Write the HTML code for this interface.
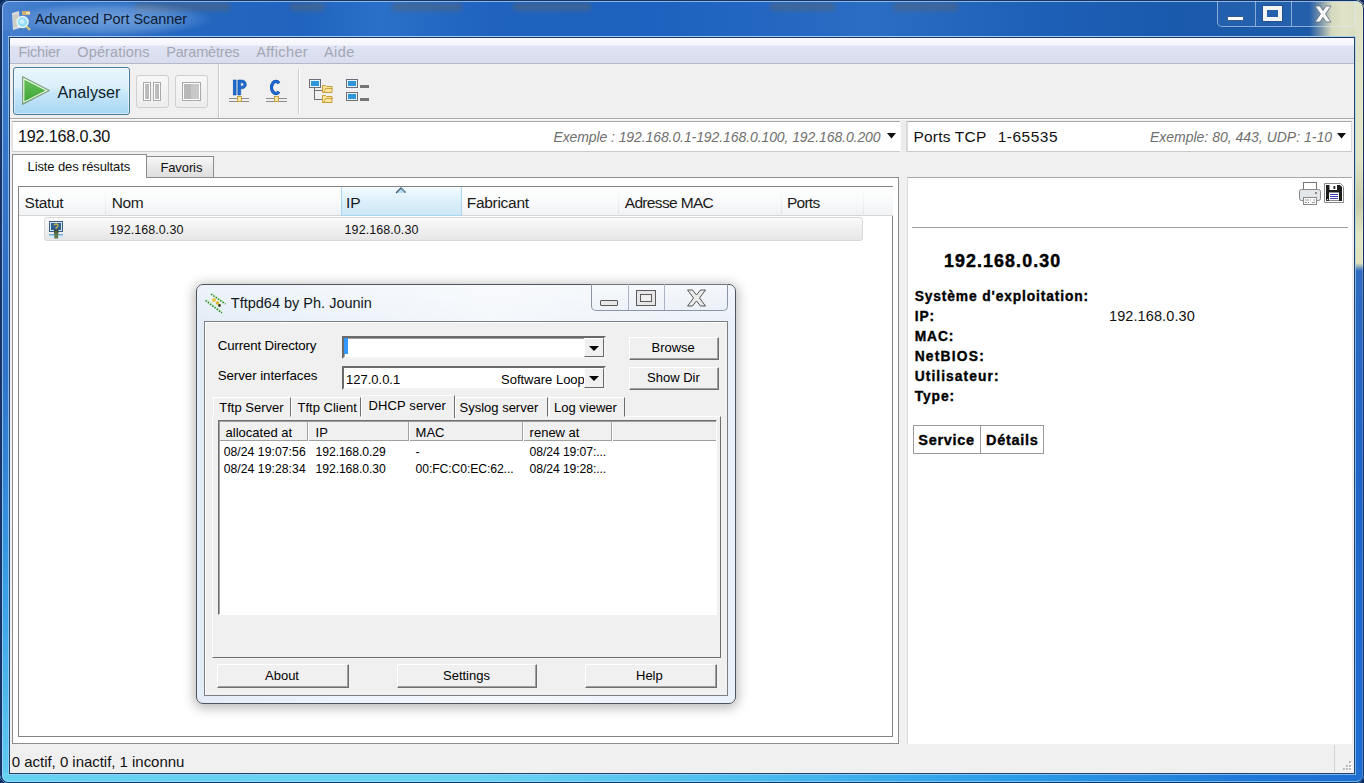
<!DOCTYPE html>
<html><head><meta charset="utf-8">
<style>
*{box-sizing:border-box;margin:0;padding:0}
html,body{width:1364px;height:783px;overflow:hidden;background:#0d2b5e;font-family:"Liberation Sans",sans-serif;position:relative}
.a{position:absolute}
.t{position:absolute;white-space:nowrap;line-height:1}
</style></head><body>

<div class="a" style="left:0;top:0;width:1364px;height:783px;border-radius:8px;overflow:hidden">
<div class="a" style="left:0px;top:0px;width:1364px;height:783px;background:linear-gradient(90deg,#4a82cf 0%,#3372c6 6%,#2467c0 14%,#2064bf 22%,#2a6fc8 28%,#1f63bf 36%,#1d62be 48%,#2367c2 56%,#2a6dc4 64%,#1e60b8 76%,#1a5aad 86%,#1c5aa8 96%,#7f98a8 96.9%,#d4d8bc 97.6%,#dfe2c6 98.5%,#d5d9bc 100%)"></div>
<div class="a" style="left:135px;top:3px;width:95px;height:8px;background:rgba(85,100,120,.55);filter:blur(2.2px);border-radius:3px"></div>
<div class="a" style="left:290px;top:3px;width:35px;height:8px;background:rgba(85,100,120,.55);filter:blur(2.2px);border-radius:3px"></div>
<div class="a" style="left:392px;top:3px;width:70px;height:8px;background:rgba(85,100,120,.55);filter:blur(2.2px);border-radius:3px"></div>
<div class="a" style="left:513px;top:3px;width:78px;height:8px;background:rgba(85,100,120,.55);filter:blur(2.2px);border-radius:3px"></div>
<div class="a" style="left:770px;top:3px;width:65px;height:8px;background:rgba(85,100,120,.55);filter:blur(2.2px);border-radius:3px"></div>
<div class="a" style="left:893px;top:3px;width:65px;height:8px;background:rgba(85,100,120,.55);filter:blur(2.2px);border-radius:3px"></div>
<div class="a" style="left:0px;top:30px;width:10px;height:753px;background:linear-gradient(180deg,#3f7bcb 0%,#2f6fc4 35%,#2f72c8 45%,#3aa0e6 75%,#62cdf2 100%)"></div>
<div class="a" style="left:1355px;top:0px;width:9px;height:783px;background:linear-gradient(180deg,#dfe2c6 0%,#e2e5c8 20%,#c8ccaa 26%,#e3e6c4 30%,#dfe2bc 33.6%,#2f6bc0 34.6%,#1f64c8 60%,#1e6ed2 100%)"></div>
<div class="a" style="left:0px;top:773px;width:1364px;height:10px;background:linear-gradient(90deg,#66d2f2 0%,#6ad3f2 35%,#4bbcee 55%,#2a9be8 75%,#1f78d6 92%,#1e6ed0 100%)"></div>
<div class="a" style="left:0;top:0;width:1364px;height:783px;border-radius:8px;border:1px solid #163468;border-width:1px 1px 1px 2px"></div>
<div class="a" style="left:2px;top:1px;width:1361px;height:781px;border-radius:7px;border:1px solid rgba(175,210,240,.75);border-right-color:rgba(255,255,255,.2);border-bottom-color:rgba(160,225,250,.6)"></div>
</div>
<svg class="a" style="left:10px;top:9px" width="22" height="22" viewBox="0 0 22 22">
<path d="M2 4 L9 2 L10 19 L3 21 Z" fill="#e8e6df" opacity=".9"/>
<path d="M3 6 L8 5 L8.5 17 L3.5 18.5Z" fill="#c9c6bb" opacity=".7"/>
<circle cx="12.5" cy="13" r="5.5" fill="#8fdcf8" stroke="#e9f6fb" stroke-width="1.5"/>
<circle cx="12" cy="12.5" r="2.5" fill="#d9f4ff" opacity=".8"/>
<rect x="12" y="2" width="8" height="4" fill="#e0b060" opacity=".9"/>
<rect x="16" y="3" width="4" height="2" fill="#f3e0a8"/>
<path d="M16.5 17.5 L20 21" stroke="#d3c27a" stroke-width="2.4"/>
</svg>
<div class="a" style="left:12px;top:2px;width:200px;height:34px;background:radial-gradient(ellipse at 50% 50%,rgba(200,225,250,.42) 0%,rgba(200,225,250,.25) 45%,rgba(200,225,250,0) 72%)"></div>
<div class="t" style="left:35px;top:12.31px;font-size:14.4px;color:#0b1a33;font-weight:normal;font-style:normal;letter-spacing:0px;font-family:'Liberation Sans',sans-serif;">Advanced Port Scanner</div>
<div class="a" style="left:1217px;top:1px;width:138px;height:26px;border:1px solid rgba(220,235,255,.55);border-top:none;border-radius:0 0 5px 5px;background:rgba(255,255,255,.04)"></div>
<div class="a" style="left:1255px;top:1px;width:1px;height:25px;background:rgba(220,235,255,.55)"></div>
<div class="a" style="left:1291px;top:1px;width:1px;height:25px;background:rgba(220,235,255,.55)"></div>
<div class="a" style="left:1227px;top:16px;width:17px;height:5px;background:#fff;border:1px solid #3a5a8a;border-radius:1px"></div>
<div class="a" style="left:1263px;top:6px;width:19px;height:15px;border:4px solid #f4f4f4;outline:1px solid rgba(40,70,120,.6)"></div>
<svg class="a" style="left:1312px;top:5px" width="22" height="18" viewBox="0 0 22 18"><path d="M3 1 L8 1 L11 5.5 L14 1 L19 1 L13.5 9 L19 17 L14 17 L11 12.5 L8 17 L3 17 L8.5 9 Z" fill="#f7f7f7" stroke="#5a6a7a" stroke-width=".8"/></svg>
<div class="a" style="left:9px;top:37px;width:1346px;height:737px;background:#f0f0f0;border:1px solid #23416b;border-top-color:#1c3560"></div>
<div class="a" style="left:8px;top:36px;width:1348px;height:739px;border:1px solid rgba(165,212,245,.7);border-top-color:#a9cdf0"></div>
<div class="a" style="left:10px;top:38px;width:1344px;height:26px;background:linear-gradient(180deg,#fbfbfe 0%,#f4f5fb 28%,#dfe3f2 34%,#d8ddef 100%);border-bottom:1px solid #b3b9cb"></div>
<div class="t" style="left:18.4px;top:45.33px;font-size:14.5px;color:#a3a7b3;font-weight:normal;font-style:normal;letter-spacing:-0.2px;font-family:'Liberation Sans',sans-serif;">Fichier</div>
<div class="t" style="left:77.3px;top:45.33px;font-size:14.5px;color:#a3a7b3;font-weight:normal;font-style:normal;letter-spacing:0.13px;font-family:'Liberation Sans',sans-serif;">Opérations</div>
<div class="t" style="left:166.2px;top:45.33px;font-size:14.5px;color:#a3a7b3;font-weight:normal;font-style:normal;letter-spacing:-0.17px;font-family:'Liberation Sans',sans-serif;">Paramètres</div>
<div class="t" style="left:256.2px;top:45.33px;font-size:14.5px;color:#a3a7b3;font-weight:normal;font-style:normal;letter-spacing:0.37px;font-family:'Liberation Sans',sans-serif;">Afficher</div>
<div class="t" style="left:324px;top:45.33px;font-size:14.5px;color:#a3a7b3;font-weight:normal;font-style:normal;letter-spacing:0.45px;font-family:'Liberation Sans',sans-serif;">Aide</div>
<div class="a" style="left:10px;top:64px;width:1344px;height:54px;background:#f0f0f0"></div>
<div class="a" style="left:10px;top:118px;width:1344px;height:1px;background:#a7a7a7"></div>
<div class="a" style="left:10px;top:119px;width:1344px;height:1px;background:#fbfbfb"></div>
<div class="a" style="left:13px;top:67px;width:117px;height:48px;border:1px solid #4a7a98;border-radius:3px;background:linear-gradient(180deg,#e9f6fd 0%,#dcf0fb 40%,#c6e6f9 55%,#a8d6f3 100%);box-shadow:inset 0 0 0 1px rgba(255,255,255,.5)"></div>
<svg class="a" style="left:21px;top:75px" width="30" height="31" viewBox="0 0 30 31"><defs><linearGradient id="tg" x1="0" y1="0" x2="0" y2="1"><stop offset="0" stop-color="#66c35a"/><stop offset="1" stop-color="#3da236"/></linearGradient></defs><path d="M1.5 1.5 L28.5 15.5 L1.5 29.5 Z" fill="url(#tg)" stroke="#8a9a8a" stroke-width="1"/><path d="M2.8 3.8 L25.8 15.5 L2.8 27.2 Z" fill="none" stroke="#f4fbf2" stroke-width="1.1"/></svg>
<div class="t" style="left:57.5px;top:83.99px;font-size:16.2px;color:#0e1e2c;font-weight:normal;font-style:normal;letter-spacing:0px;font-family:'Liberation Sans',sans-serif;">Analyser</div>
<div class="a" style="left:136px;top:75px;width:33px;height:33px;border:1px solid #cfcfcf;border-radius:3px;background:linear-gradient(180deg,#f7f7f7,#ededed)"></div>
<div class="a" style="left:175px;top:75px;width:33px;height:33px;border:1px solid #cfcfcf;border-radius:3px;background:linear-gradient(180deg,#f7f7f7,#ededed)"></div>
<div class="a" style="left:143px;top:82px;width:8px;height:19px;border:1px solid #a9a9a9;background:linear-gradient(90deg,#c3c3c3,#b4b4b4);box-shadow:inset 0 0 0 1px #fff"></div>
<div class="a" style="left:153px;top:82px;width:8px;height:19px;border:1px solid #a9a9a9;background:linear-gradient(90deg,#c3c3c3,#b4b4b4);box-shadow:inset 0 0 0 1px #fff"></div>
<div class="a" style="left:182px;top:82px;width:19px;height:19px;border:1px solid #a9a9a9;background:linear-gradient(90deg,#b9b9b9 0,#b9b9b9 50%,#c8c8c8 50%);box-shadow:inset 0 0 0 1px #fff"></div>
<div class="a" style="left:218px;top:64px;width:1px;height:54px;background:#c6c6c6"></div>
<div class="a" style="left:219px;top:64px;width:1px;height:54px;background:#fff"></div>
<div class="a" style="left:298px;top:69px;width:1px;height:45px;background:#cdcdcd"></div>
<div class="a" style="left:299px;top:69px;width:1px;height:45px;background:#fff"></div>
<svg class="a" style="left:228px;top:76px" width="24" height="28" viewBox="0 0 24 28"><g fill="#1e6ad0" stroke="#0b48a0" stroke-width=".5"><rect x="5.2" y="4" width="2.9" height="15"/><path fill-rule="evenodd" d="M9.8 4 h4.2 a4.3 4.3 0 0 1 0 8.8 h-1.3 v6.2 h-2.9 z M12.7 6.7 h1.2 a1.75 1.75 0 0 1 0 3.5 h-1.2 z"/></g><path d="M1 22.5h20M1 25.5h20" stroke="#8d8d8d" stroke-width="1"/><rect x="9.5" y="20.5" width="4" height="5" fill="#f7e8a0" stroke="#c39a3a" stroke-width=".9"/></svg>
<svg class="a" style="left:265px;top:76px" width="24" height="28" viewBox="0 0 24 28"><path d="M13.94 7.19 A4.3 6.1 0 1 0 13.94 15.81" fill="none" stroke="#0b48a0" stroke-width="3.3"/><path d="M13.94 7.19 A4.3 6.1 0 1 0 13.94 15.81" fill="none" stroke="#1e6ad0" stroke-width="2.4"/><path d="M1 22.5h21M1 25.5h21" stroke="#8d8d8d" stroke-width="1"/><rect x="9.5" y="20.5" width="4" height="5" fill="#f7e8a0" stroke="#c39a3a" stroke-width=".9"/></svg>
<div class="a" style="left:309px;top:79px;width:12px;height:9px;background:#2d95d8;border:1px solid #6a6e78;box-shadow:inset 0 0 0 1px #e6f6fc"></div>
<div class="a" style="left:314px;top:88px;width:1px;height:12px;background:#6f6f6f"></div>
<div class="a" style="left:314px;top:90px;width:9px;height:1px;background:#6f6f6f"></div>
<div class="a" style="left:314px;top:99px;width:9px;height:1px;background:#6f6f6f"></div>
<svg class="a" style="left:322px;top:84px" width="11" height="9" viewBox="0 0 11 9"><path d="M.5 1.5h3l1 1h5.5v6H.5z" fill="#fbe79a" stroke="#c99a3c"/><path d="M2 8.5 L3.5 4.5 H10.5" fill="none" stroke="#c99a3c" stroke-width=".9"/></svg>
<svg class="a" style="left:322px;top:94px" width="11" height="9" viewBox="0 0 11 9"><path d="M.5 1.5h3l1 1h5.5v6H.5z" fill="#fbe79a" stroke="#c99a3c"/><path d="M2 8.5 L3.5 4.5 H10.5" fill="none" stroke="#c99a3c" stroke-width=".9"/></svg>
<div class="a" style="left:346px;top:79px;width:12px;height:9px;background:#2d95d8;border:1px solid #6a6e78;box-shadow:inset 0 0 0 1px #e6f6fc"></div>
<div class="a" style="left:346px;top:92px;width:12px;height:9px;background:#2d95d8;border:1px solid #6a6e78;box-shadow:inset 0 0 0 1px #e6f6fc"></div>
<div class="a" style="left:360px;top:85px;width:9px;height:2.5px;background:#757575"></div>
<div class="a" style="left:360px;top:98px;width:9px;height:2.5px;background:#757575"></div>
<div class="a" style="left:12px;top:121px;width:888px;height:31px;background:#fff;border-top:1px solid #a9a9a9;border-bottom:1px solid #c9c9c9;border-left:1px solid #dcdcdc"></div>
<div class="t" style="left:18px;top:128.09px;font-size:16.2px;color:#111;font-weight:normal;font-style:normal;letter-spacing:-0.2px;font-family:'Liberation Sans',sans-serif;">192.168.0.30</div>
<div class="t" style="right:483.5px;top:130.35px;font-size:14px;color:#6f6f6f;font-weight:normal;font-style:italic;letter-spacing:-0.09px;font-family:'Liberation Sans',sans-serif;">Exemple : 192.168.0.1-192.168.0.100, 192.168.0.200</div>
<svg class="a" style="left:887px;top:133px" width="9" height="6" viewBox="0 0 9 6"><path d="M0 0 L9 0 L4.5 5.5 Z" fill="#111"/></svg>
<div class="a" style="left:900px;top:121px;width:7px;height:31px;background:#ececec;border-left:1px solid #fafafa;border-right:1px solid #d6d6d6"></div>
<div class="a" style="left:907px;top:121px;width:445px;height:31px;background:#fff;border-top:1px solid #a9a9a9;border-bottom:1px solid #c9c9c9;border-left:1px solid #dcdcdc;border-right:1px solid #dcdcdc"></div>
<div class="t" style="left:913.5px;top:129.08px;font-size:15.5px;color:#111;font-weight:normal;font-style:normal;letter-spacing:0.19px;font-family:'Liberation Sans',sans-serif;">Ports TCP</div>
<div class="t" style="left:997.7px;top:129.08px;font-size:15.5px;color:#111;font-weight:normal;font-style:normal;letter-spacing:0.5px;font-family:'Liberation Sans',sans-serif;">1-65535</div>
<div class="t" style="right:32px;top:130.35px;font-size:14px;color:#6f6f6f;font-weight:normal;font-style:italic;letter-spacing:0px;font-family:'Liberation Sans',sans-serif;">Exemple: 80, 443, UDP: 1-10</div>
<svg class="a" style="left:1337px;top:133px" width="9" height="6" viewBox="0 0 9 6"><path d="M0 0 L9 0 L4.5 5.5 Z" fill="#111"/></svg>
<div class="a" style="left:12px;top:177px;width:887px;height:567px;background:#fff;border:1px solid #8d8d8d"></div>
<div class="a" style="left:146px;top:156px;width:68px;height:22px;border:1px solid #8d8d8d;background:linear-gradient(180deg,#f7f7f7 0%,#ececec 40%,#dedede 100%)"></div>
<div class="a" style="left:12px;top:154px;width:135px;height:24px;background:#fff;border:1px solid #8d8d8d;border-bottom:none"></div>
<div class="t" style="left:27.6px;top:159.90px;font-size:13px;color:#111;font-weight:normal;font-style:normal;letter-spacing:-0.12px;font-family:'Liberation Sans',sans-serif;">Liste des résultats</div>
<div class="t" style="left:160.4px;top:161.30px;font-size:13px;color:#111;font-weight:normal;font-style:normal;letter-spacing:-0.1px;font-family:'Liberation Sans',sans-serif;">Favoris</div>
<div class="a" style="left:18px;top:186px;width:875px;height:551px;background:#fff;border:1px solid #848484"></div>
<div class="a" style="left:19px;top:187px;width:874px;height:29px;background:linear-gradient(180deg,#ffffff 0%,#f9fafb 50%,#f1f2f4 100%);border-bottom:1px solid #d5d5d5"></div>
<div class="a" style="left:341px;top:187px;width:121px;height:29px;background:linear-gradient(180deg,#f4fbfe 0%,#e3f3fc 35%,#d9eefa 60%,#cfe8f7 100%);border:1px solid #a8d6f0;border-top:none"></div>
<svg class="a" style="left:395px;top:187px" width="12" height="7" viewBox="0 0 12 7"><path d="M1 6 L6 1 L11 6 Z" fill="#b9dcf2"/><path d="M1 6 L6 1 L10.5 5.5" fill="none" stroke="#3d5a73" stroke-width="1.3"/><path d="M6 1 L10.5 5.5" fill="none" stroke="#6f8fa8" stroke-width="1.1"/></svg>
<div class="a" style="left:105px;top:187px;width:1px;height:29px;background:linear-gradient(180deg,#fff,#dfe2e6)"></div>
<div class="a" style="left:618px;top:187px;width:1px;height:29px;background:linear-gradient(180deg,#fff,#dfe2e6)"></div>
<div class="a" style="left:781px;top:187px;width:1px;height:29px;background:linear-gradient(180deg,#fff,#dfe2e6)"></div>
<div class="a" style="left:863px;top:187px;width:1px;height:29px;background:linear-gradient(180deg,#fff,#dfe2e6)"></div>
<div class="t" style="left:24.6px;top:194.78px;font-size:15.5px;color:#1a1a1a;font-weight:normal;font-style:normal;letter-spacing:-0.3px;font-family:'Liberation Sans',sans-serif;">Statut</div>
<div class="t" style="left:111.7px;top:194.78px;font-size:15.5px;color:#1a1a1a;font-weight:normal;font-style:normal;letter-spacing:-0.35px;font-family:'Liberation Sans',sans-serif;">Nom</div>
<div class="t" style="left:346px;top:194.78px;font-size:15.5px;color:#1a1a1a;font-weight:normal;font-style:normal;letter-spacing:0px;font-family:'Liberation Sans',sans-serif;">IP</div>
<div class="t" style="left:466.8px;top:194.78px;font-size:15.5px;color:#1a1a1a;font-weight:normal;font-style:normal;letter-spacing:-0.3px;font-family:'Liberation Sans',sans-serif;">Fabricant</div>
<div class="t" style="left:624.7px;top:194.78px;font-size:15.5px;color:#1a1a1a;font-weight:normal;font-style:normal;letter-spacing:-0.65px;font-family:'Liberation Sans',sans-serif;">Adresse MAC</div>
<div class="t" style="left:787px;top:194.78px;font-size:15.5px;color:#1a1a1a;font-weight:normal;font-style:normal;letter-spacing:-0.75px;font-family:'Liberation Sans',sans-serif;">Ports</div>
<div class="a" style="left:44px;top:217px;width:819px;height:24px;border:1px solid #d9d9d9;border-radius:3px;background:linear-gradient(180deg,#fafafa 0%,#f0f0f0 50%,#e6e6e6 100%)"></div>
<svg class="a" style="left:48px;top:220px" width="16" height="19" viewBox="0 0 16 19"><rect x="1.5" y="1.5" width="13" height="10" fill="#cfe8f8" stroke="#3b5f80"/><rect x="3" y="3" width="10" height="7" fill="#2f5f92"/><path d="M6 5.2 Q8 3 10 5 Q10.5 6.5 8.5 7.5 L8 9" fill="none" stroke="#c9b24a" stroke-width="1.4"/><rect x="6.5" y="10" width="3.5" height="8" fill="#4d6a3c" stroke="#222" stroke-width=".6"/><rect x="1" y="14" width="14" height="1.6" fill="#6aa8d8"/><rect x="1" y="15.6" width="14" height="2.4" fill="#cfeaf9" opacity=".8"/><rect x="6.5" y="13.5" width="3.5" height="4.5" fill="#5f7a4a"/></svg>
<div class="t" style="left:109.6px;top:223.92px;font-size:12.5px;color:#111;font-weight:normal;font-style:normal;letter-spacing:0.07px;font-family:'Liberation Sans',sans-serif;">192.168.0.30</div>
<div class="t" style="left:344.6px;top:223.92px;font-size:12.5px;color:#111;font-weight:normal;font-style:normal;letter-spacing:0.07px;font-family:'Liberation Sans',sans-serif;">192.168.0.30</div>
<div class="a" style="left:907px;top:177px;width:445px;height:567px;background:#fff;border-left:1px solid #dadada;border-top:1px solid #a7a7a7"></div>
<div class="a" style="left:912px;top:227px;width:436px;height:1px;background:#a0a0a0"></div>
<div class="t" style="left:944px;top:253.23px;font-size:17.8px;color:#000;font-weight:bold;font-style:normal;letter-spacing:1.12px;font-family:'Liberation Sans',sans-serif;-webkit-text-stroke:.45px #000">192.168.0.30</div>
<div class="t" style="left:914.7px;top:289.62px;font-size:13.8px;color:#000;font-weight:bold;font-style:normal;letter-spacing:0.8700000000000001px;font-family:'Liberation Sans',sans-serif;-webkit-text-stroke:.35px #000">Système d'exploitation:</div>
<div class="t" style="left:914.7px;top:309.62px;font-size:13.8px;color:#000;font-weight:bold;font-style:normal;letter-spacing:0.8700000000000001px;font-family:'Liberation Sans',sans-serif;-webkit-text-stroke:.35px #000">IP:</div>
<div class="t" style="left:914.7px;top:329.62px;font-size:13.8px;color:#000;font-weight:bold;font-style:normal;letter-spacing:0.8700000000000001px;font-family:'Liberation Sans',sans-serif;-webkit-text-stroke:.35px #000">MAC:</div>
<div class="t" style="left:914.7px;top:349.62px;font-size:13.8px;color:#000;font-weight:bold;font-style:normal;letter-spacing:1.22px;font-family:'Liberation Sans',sans-serif;-webkit-text-stroke:.35px #000">NetBIOS:</div>
<div class="t" style="left:914.7px;top:369.62px;font-size:13.8px;color:#000;font-weight:bold;font-style:normal;letter-spacing:1.07px;font-family:'Liberation Sans',sans-serif;-webkit-text-stroke:.35px #000">Utilisateur:</div>
<div class="t" style="left:914.7px;top:389.62px;font-size:13.8px;color:#000;font-weight:bold;font-style:normal;letter-spacing:0.9199999999999999px;font-family:'Liberation Sans',sans-serif;-webkit-text-stroke:.35px #000">Type:</div>
<div class="t" style="left:1109px;top:309.33px;font-size:14.5px;color:#111;font-weight:normal;font-style:normal;letter-spacing:0.1px;font-family:'Liberation Sans',sans-serif;">192.168.0.30</div>
<div class="a" style="left:913px;top:425px;width:131px;height:29px;border:1px solid #9a9a9a;background:#fff"></div>
<div class="a" style="left:980px;top:426px;width:1px;height:27px;background:#9a9a9a"></div>
<div class="t" style="left:918.3px;top:432.73px;font-size:14.5px;color:#000;font-weight:bold;font-style:normal;letter-spacing:0.68px;font-family:'Liberation Sans',sans-serif;-webkit-text-stroke:.35px #000">Service</div>
<div class="t" style="left:986px;top:432.73px;font-size:14.5px;color:#000;font-weight:bold;font-style:normal;letter-spacing:0.72px;font-family:'Liberation Sans',sans-serif;-webkit-text-stroke:.35px #000">Détails</div>
<svg class="a" style="left:1298px;top:181px" width="48" height="25" viewBox="0 0 48 25">
<rect x="5.5" y="1.5" width="13" height="7" fill="#fff" stroke="#777"/>
<rect x="1.5" y="8.5" width="21" height="11" rx="2" fill="#e3e7ea" stroke="#8a8a8a"/>
<rect x="5.5" y="16.5" width="13" height="7" fill="#fff" stroke="#888"/>
<rect x="17" y="11" width="2" height="2" fill="#888"/>
<path d="M7 19h4M12 19h1M15 19h2M7 21.5h2M10 21.5h1M14 21.5h3" stroke="#999" stroke-width="1"/>
<path d="M26.5 2.5h16l3 3v16h-19z" fill="#fff" stroke="#8a8a8a"/>
<path d="M28 4h14l2 2v14H28z" fill="#1c1c1c"/>
<rect x="31.5" y="4" width="7.5" height="5" fill="#fff"/><rect x="35.5" y="5" width="1.8" height="3" fill="#222"/>
<rect x="31" y="11.5" width="10" height="8" fill="#fff"/>
<path d="M32 13.5h8M32 15.5h8M32 17.5h8" stroke="#3c3cb0" stroke-width="1"/>
<rect x="29" y="18" width="1.2" height="1.2" fill="#ddd"/>
</svg>
<div class="t" style="left:11.8px;top:753.50px;font-size:15px;color:#111;font-weight:normal;font-style:normal;letter-spacing:-0.03px;font-family:'Liberation Sans',sans-serif;">0 actif, 0 inactif, 1 inconnu</div>
<div class="a" style="left:1334px;top:745px;width:1px;height:27px;background:#d3d3d3"></div>
<div class="a" style="left:1349px;top:761px;width:2px;height:2px;background:#b9b9b9;box-shadow:1px 1px 0 #fff"></div>
<div class="a" style="left:1346px;top:764.5px;width:2px;height:2px;background:#b9b9b9;box-shadow:1px 1px 0 #fff"></div>
<div class="a" style="left:1349px;top:764.5px;width:2px;height:2px;background:#b9b9b9;box-shadow:1px 1px 0 #fff"></div>
<div class="a" style="left:1342.5px;top:768px;width:2px;height:2px;background:#b9b9b9;box-shadow:1px 1px 0 #fff"></div>
<div class="a" style="left:1346px;top:768px;width:2px;height:2px;background:#b9b9b9;box-shadow:1px 1px 0 #fff"></div>
<div class="a" style="left:1349px;top:768px;width:2px;height:2px;background:#b9b9b9;box-shadow:1px 1px 0 #fff"></div>
<div class="a" style="left:196px;top:284px;width:540px;height:420px;border-radius:7px;box-shadow:0 2px 12px 2px rgba(0,0,0,.28)"></div>
<div class="a" style="left:196px;top:284px;width:540px;height:420px;border-radius:7px;border:1px solid #4d5560;background:linear-gradient(90deg,#e4edf7 0%,#eef4fb 30%,#f5f8fc 55%,#ebf1f9 100%)"></div>
<div class="a" style="left:197px;top:285px;width:538px;height:36px;border-radius:6px 6px 0 0;background:linear-gradient(180deg,rgba(255,255,255,.35),rgba(255,255,255,0))"></div>
<svg class="a" style="left:204px;top:292px" width="23" height="23" viewBox="0 0 23 23"><path d="M1.5 8.5 L18 21 M7 2 L21.5 12" stroke="#1f8a1f" stroke-width="1.5" stroke-dasharray="1.6 1.2"/><path d="M2.5 7.5 L18.5 19.5 M8 1.5 L21.5 11" stroke="#a8e07a" stroke-width=".6" opacity=".8"/><circle cx="10" cy="8" r="2" fill="#e8c43a"/><circle cx="13.5" cy="11" r="1.8" fill="#d9b52e"/><circle cx="15.5" cy="13.5" r="1.4" fill="#3a3a1a"/></svg>
<div class="t" style="left:230.8px;top:296.23px;font-size:14.5px;color:#101820;font-weight:normal;font-style:normal;letter-spacing:0px;font-family:'Liberation Sans',sans-serif;">Tftpd64 by Ph. Jounin</div>
<div class="a" style="left:591px;top:284px;width:137px;height:27px;border:1px solid #8a96a6;border-top:none;border-radius:0 0 5px 5px;background:linear-gradient(180deg,rgba(255,255,255,.2),rgba(230,236,245,.3))"></div>
<div class="a" style="left:628px;top:284px;width:1px;height:26px;background:#aab4c2"></div>
<div class="a" style="left:664px;top:284px;width:1px;height:26px;background:#aab4c2"></div>
<div class="a" style="left:600px;top:300px;width:18px;height:6px;border:1px solid #5a5a5a;background:#e8e8e8;border-radius:1px"></div>
<div class="a" style="left:636px;top:290px;width:20px;height:16px;border:1px solid #5a5a5a;background:#f0f0f0;box-shadow:inset 0 0 0 3px #e6e6e6, inset 0 0 0 4px #5a5a5a"></div>
<svg class="a" style="left:686px;top:289px" width="21" height="18" viewBox="0 0 21 18"><path d="M1.5 1 L6.5 1 L10.5 6 L14.5 1 L19.5 1 L13.5 9 L19.5 17 L14.5 17 L10.5 12 L6.5 17 L1.5 17 L7.5 9 Z" fill="#eaeaea" stroke="#555" stroke-width="1"/></svg>
<div class="a" style="left:204px;top:321px;width:524px;height:375px;background:#f0f0f0;border:1px solid #7a7f86;box-shadow:inset 1px 1px 0 #fff"></div>
<div class="t" style="left:217.7px;top:339.24px;font-size:13.3px;color:#000;font-weight:normal;font-style:normal;letter-spacing:-0.15px;font-family:'Liberation Sans',sans-serif;">Current Directory</div>
<div class="t" style="left:217.7px;top:369.14px;font-size:13.3px;color:#000;font-weight:normal;font-style:normal;letter-spacing:-0.05px;font-family:'Liberation Sans',sans-serif;">Server interfaces</div>
<div class="a" style="left:342px;top:336px;width:264px;height:23px;background:#fff;border:2px solid;border-color:#6a6a6a #f4f4f4 #f4f4f4 #6a6a6a;box-shadow:inset 1px 1px 0 #a0a0a0"></div>
<div class="a" style="left:344px;top:338px;width:4px;height:16px;background:#3399ff"></div>
<div class="a" style="left:584px;top:338px;width:20px;height:19px;background:#f0f0f0;border:1px solid;border-color:#fff #6a6a6a #6a6a6a #fff"></div>
<svg class="a" style="left:589px;top:346px" width="10" height="5" viewBox="0 0 10 5"><path d="M0 0 L10 0 L5 5 Z" fill="#000"/></svg>
<div class="a" style="left:342px;top:366px;width:264px;height:24px;background:#fff;border:2px solid;border-color:#6a6a6a #f4f4f4 #f4f4f4 #6a6a6a"></div>
<div class="t" style="left:346px;top:373.00px;font-size:13px;color:#000;font-weight:normal;font-style:normal;letter-spacing:0px;font-family:'Liberation Sans',sans-serif;">127.0.0.1</div>
<div class="a" style="left:344px;top:368px;width:240px;height:20px;overflow:hidden"><div class="t" style="left:157px;top:5px;font-size:13px;color:#000">Software Loopback</div></div>
<div class="a" style="left:584px;top:368px;width:20px;height:20px;background:#f0f0f0;border:1px solid;border-color:#fff #6a6a6a #6a6a6a #fff"></div>
<svg class="a" style="left:589px;top:376px" width="10" height="5" viewBox="0 0 10 5"><path d="M0 0 L10 0 L5 5 Z" fill="#000"/></svg>
<div class="a" style="left:629px;top:337px;width:90px;height:23px;background:#f0f0f0;border:1px solid;border-color:#fff #6e6e6e #6e6e6e #fff;box-shadow:inset -1px -1px 0 #a0a0a0"></div>
<div class="t" style="left:651.5px;top:341.00px;font-size:13px;color:#000;font-weight:normal;font-style:normal;letter-spacing:0px;font-family:'Liberation Sans',sans-serif;">Browse</div>
<div class="a" style="left:629px;top:367px;width:90px;height:23px;background:#f0f0f0;border:1px solid;border-color:#fff #6e6e6e #6e6e6e #fff;box-shadow:inset -1px -1px 0 #a0a0a0"></div>
<div class="t" style="left:647px;top:371.00px;font-size:13px;color:#000;font-weight:normal;font-style:normal;letter-spacing:0px;font-family:'Liberation Sans',sans-serif;">Show Dir</div>
<div class="a" style="left:212px;top:416px;width:509px;height:242px;background:#f0f0f0;border:1px solid;border-color:#fff #6e6e6e #6e6e6e #fff"></div>
<div class="a" style="left:213px;top:397px;width:78px;height:20px;background:#f0f0f0;border:1px solid;border-color:#fff #6e6e6e transparent #fff"></div>
<div class="t" style="left:219.3px;top:400.50px;font-size:13px;color:#000;font-weight:normal;font-style:normal;letter-spacing:0px;font-family:'Liberation Sans',sans-serif;">Tftp Server</div>
<div class="a" style="left:291px;top:397px;width:70px;height:20px;background:#f0f0f0;border:1px solid;border-color:#fff #6e6e6e transparent #fff"></div>
<div class="t" style="left:297.5px;top:400.50px;font-size:13px;color:#000;font-weight:normal;font-style:normal;letter-spacing:0px;font-family:'Liberation Sans',sans-serif;">Tftp Client</div>
<div class="a" style="left:455px;top:397px;width:93px;height:20px;background:#f0f0f0;border:1px solid;border-color:#fff #6e6e6e transparent #fff"></div>
<div class="t" style="left:459.5px;top:400.50px;font-size:13px;color:#000;font-weight:normal;font-style:normal;letter-spacing:0px;font-family:'Liberation Sans',sans-serif;">Syslog server</div>
<div class="a" style="left:549px;top:397px;width:76px;height:20px;background:#f0f0f0;border:1px solid;border-color:#fff #6e6e6e transparent #fff"></div>
<div class="t" style="left:554px;top:400.50px;font-size:13px;color:#000;font-weight:normal;font-style:normal;letter-spacing:0px;font-family:'Liberation Sans',sans-serif;">Log viewer</div>
<div class="a" style="left:361px;top:395px;width:94px;height:23px;background:#f0f0f0;border:1px solid;border-color:#fff #6e6e6e transparent #fff;border-bottom:none"></div>
<div class="t" style="left:368.6px;top:398.60px;font-size:13px;color:#000;font-weight:normal;font-style:normal;letter-spacing:0.1px;font-family:'Liberation Sans',sans-serif;">DHCP server</div>
<div class="a" style="left:218px;top:420px;width:499px;height:195px;background:#fff;border:1px solid;border-color:#6e6e6e #fff #fff #6e6e6e;box-shadow:inset 1px 1px 0 #a0a0a0"></div>
<div class="a" style="left:220px;top:422px;width:496px;height:19px;background:#f0f0f0;border-bottom:1px solid #a0a0a0"></div>
<div class="a" style="left:307px;top:422px;width:1px;height:19px;background:#a0a0a0;box-shadow:1px 0 0 #fff"></div>
<div class="a" style="left:408px;top:422px;width:1px;height:19px;background:#a0a0a0;box-shadow:1px 0 0 #fff"></div>
<div class="a" style="left:522px;top:422px;width:1px;height:19px;background:#a0a0a0;box-shadow:1px 0 0 #fff"></div>
<div class="a" style="left:611px;top:422px;width:1px;height:19px;background:#a0a0a0;box-shadow:1px 0 0 #fff"></div>
<div class="t" style="left:225.6px;top:425.50px;font-size:13px;color:#000;font-weight:normal;font-style:normal;letter-spacing:0px;font-family:'Liberation Sans',sans-serif;">allocated at</div>
<div class="t" style="left:315.6px;top:425.50px;font-size:13px;color:#000;font-weight:normal;font-style:normal;letter-spacing:0px;font-family:'Liberation Sans',sans-serif;">IP</div>
<div class="t" style="left:415.6px;top:425.50px;font-size:13px;color:#000;font-weight:normal;font-style:normal;letter-spacing:0px;font-family:'Liberation Sans',sans-serif;">MAC</div>
<div class="t" style="left:529.6px;top:425.50px;font-size:13px;color:#000;font-weight:normal;font-style:normal;letter-spacing:0px;font-family:'Liberation Sans',sans-serif;">renew at</div>
<div class="t" style="left:223.7px;top:446.07px;font-size:12.2px;color:#000;font-weight:normal;font-style:normal;letter-spacing:0.05px;font-family:'Liberation Sans',sans-serif;">08/24 19:07:56</div>
<div class="t" style="left:315.6px;top:446.07px;font-size:12.2px;color:#000;font-weight:normal;font-style:normal;letter-spacing:-0.1px;font-family:'Liberation Sans',sans-serif;">192.168.0.29</div>
<div class="t" style="left:415.6px;top:446.07px;font-size:12.2px;color:#000;font-weight:normal;font-style:normal;letter-spacing:-0.1px;font-family:'Liberation Sans',sans-serif;">-</div>
<div class="t" style="left:529.6px;top:446.07px;font-size:12.2px;color:#000;font-weight:normal;font-style:normal;letter-spacing:-0.1px;font-family:'Liberation Sans',sans-serif;">08/24 19:07:...</div>
<div class="t" style="left:223.7px;top:462.97px;font-size:12.2px;color:#000;font-weight:normal;font-style:normal;letter-spacing:0.05px;font-family:'Liberation Sans',sans-serif;">08/24 19:28:34</div>
<div class="t" style="left:315.6px;top:462.97px;font-size:12.2px;color:#000;font-weight:normal;font-style:normal;letter-spacing:-0.1px;font-family:'Liberation Sans',sans-serif;">192.168.0.30</div>
<div class="t" style="left:415.6px;top:462.97px;font-size:12.2px;color:#000;font-weight:normal;font-style:normal;letter-spacing:-0.1px;font-family:'Liberation Sans',sans-serif;">00:FC:C0:EC:62...</div>
<div class="t" style="left:529.6px;top:462.97px;font-size:12.2px;color:#000;font-weight:normal;font-style:normal;letter-spacing:-0.1px;font-family:'Liberation Sans',sans-serif;">08/24 19:28:...</div>
<div class="a" style="left:217px;top:664px;width:132px;height:24px;background:#f0f0f0;border:1px solid;border-color:#fff #6e6e6e #6e6e6e #fff;box-shadow:inset -1px -1px 0 #a0a0a0"></div>
<div class="t" style="left:265px;top:669.20px;font-size:13px;color:#000;font-weight:normal;font-style:normal;letter-spacing:0px;font-family:'Liberation Sans',sans-serif;">About</div>
<div class="a" style="left:397px;top:664px;width:140px;height:24px;background:#f0f0f0;border:1px solid;border-color:#fff #6e6e6e #6e6e6e #fff;box-shadow:inset -1px -1px 0 #a0a0a0"></div>
<div class="t" style="left:443px;top:669.20px;font-size:13px;color:#000;font-weight:normal;font-style:normal;letter-spacing:0px;font-family:'Liberation Sans',sans-serif;">Settings</div>
<div class="a" style="left:585px;top:664px;width:132px;height:24px;background:#f0f0f0;border:1px solid;border-color:#fff #6e6e6e #6e6e6e #fff;box-shadow:inset -1px -1px 0 #a0a0a0"></div>
<div class="t" style="left:636px;top:669.20px;font-size:13px;color:#000;font-weight:normal;font-style:normal;letter-spacing:0px;font-family:'Liberation Sans',sans-serif;">Help</div>
</body></html>
